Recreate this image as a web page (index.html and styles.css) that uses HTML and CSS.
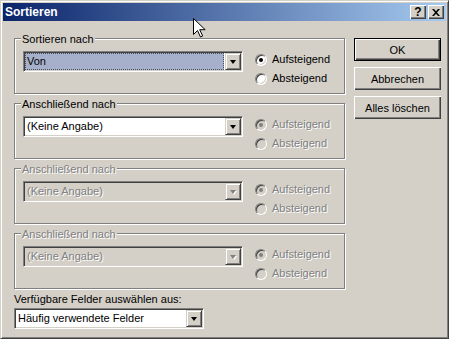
FILE: index.html
```html
<!DOCTYPE html>
<html lang="de">
<head>
    <meta charset="UTF-8">
    <title>Sortieren</title>
    <link rel="stylesheet" href="styles.css">
</head>
<body>
    <div class="dialog">
        <div class="titlebar">
            <span class="title">Sortieren</span>
            <div class="caption-buttons">
                <span class="cap-btn help">?</span>
                <span class="cap-btn">
                    <svg width="8" height="7" viewBox="0 0 8 7"><path d="M0 0h2l2 2.2L6 0h2L5 3.5 8 7H6L4 4.8 2 7H0l3-3.5z" fill="#000"/></svg>
                </span>
            </div>
        </div>

        <div class="content">
            <div class="left">
                <!-- Sortieren nach -->
                <div class="group">
                    <div class="group-title">Sortieren nach</div>
                    <div class="group-row">
                        <div class="combo combo-wide">
                            <div class="combo-field selected">Von</div>
                            <div class="combo-btn"><span class="arrow"></span></div>
                        </div>
                        <div class="radios">
                            <div class="radio-item"><span class="radio checked"></span>Aufsteigend</div>
                            <div class="radio-item"><span class="radio"></span>Absteigend</div>
                        </div>
                    </div>
                </div>

                <div class="group">
                    <div class="group-title">Anschließend nach</div>
                    <div class="group-row">
                        <div class="combo combo-wide">
                            <div class="combo-field">(Keine Angabe)</div>
                            <div class="combo-btn"><span class="arrow"></span></div>
                        </div>
                        <div class="radios disabled">
                            <div class="radio-item"><span class="radio checked"></span>Aufsteigend</div>
                            <div class="radio-item"><span class="radio"></span>Absteigend</div>
                        </div>
                    </div>
                </div>

                <div class="group disabled">
                    <div class="group-title">Anschließend nach</div>
                    <div class="group-row">
                        <div class="combo combo-wide">
                            <div class="combo-field">(Keine Angabe)</div>
                            <div class="combo-btn"><span class="arrow"></span></div>
                        </div>
                        <div class="radios">
                            <div class="radio-item"><span class="radio checked"></span>Aufsteigend</div>
                            <div class="radio-item"><span class="radio"></span>Absteigend</div>
                        </div>
                    </div>
                </div>

                <div class="group disabled">
                    <div class="group-title">Anschließend nach</div>
                    <div class="group-row">
                        <div class="combo combo-wide">
                            <div class="combo-field">(Keine Angabe)</div>
                            <div class="combo-btn"><span class="arrow"></span></div>
                        </div>
                        <div class="radios">
                            <div class="radio-item"><span class="radio checked"></span>Aufsteigend</div>
                            <div class="radio-item"><span class="radio"></span>Absteigend</div>
                        </div>
                    </div>
                </div>

                <div class="fields-label">Verfügbare Felder auswählen aus:</div>
                <div class="combo combo-narrow">
                    <div class="combo-field">Häufig verwendete Felder</div>
                    <div class="combo-btn"><span class="arrow"></span></div>
                </div>
            </div>

            <div class="buttons">
                <button class="btn default">OK</button>
                <button class="btn">Abbrechen</button>
                <button class="btn">Alles löschen</button>
            </div>
        </div>

        <!-- Mauszeiger -->
        <svg class="cursor" width="13" height="20" viewBox="0 0 13 20">
            <path d="M0.5 0.5v16l4-4 3 6.5 2.2-1-3-6.3h5.5z" fill="#fff" stroke="#000" stroke-width="1" stroke-linejoin="miter"/>
        </svg>
    </div>
</body>
</html>
```

FILE: styles.css
```css
/* Estilos base */
* {
    margin: 0;
    padding: 0;
    box-sizing: border-box;
}

body {
    font-family: "Liberation Sans", Arial, sans-serif;
    font-size: 11px;
    line-height: 13px;
    color: #000;
    background: #d4d0c8;
}

/* Ventana */
.dialog {
    position: relative;
    width: 449px;
    height: 339px;
    background: #d4d0c8;
    border: 1px solid;
    border-color: #d4d0c8 #404040 #404040 #d4d0c8;
    box-shadow: inset 1px 1px 0 #fff, inset -1px -1px 0 #808080;
    padding: 2px;
}

/* Barra de título */
.titlebar {
    height: 18px;
    display: flex;
    align-items: center;
    justify-content: space-between;
    padding: 0 2px;
    background: linear-gradient(to right, #0a246a, #a6caf0);
}

.title {
    color: #fff;
    font-weight: bold;
    font-size: 12px;
}

.caption-buttons {
    display: flex;
    gap: 2px;
}

.cap-btn {
    width: 16px;
    height: 14px;
    display: flex;
    align-items: center;
    justify-content: center;
    background: #d4d0c8;
    box-shadow: inset 1px 1px 0 #fff, inset -1px -1px 0 #404040, inset -2px -2px 0 #808080;
}

.cap-btn.help {
    font-weight: bold;
    font-size: 12px;
    padding-top: 1px;
}

/* Contenido */
.content {
    display: flex;
    gap: 9px;
    padding: 17px 0 0 11px;
}

.left {
    width: 331px;
    display: flex;
    flex-direction: column;
}

/* Marcos de grupo */
.group {
    height: 56px;
    border: 1px solid #808080;
    box-shadow: 1px 1px 0 #fff, inset 1px 1px 0 #fff;
    padding: 0 8px;
}

.group + .group {
    margin-top: 9px;
}

.group-title {
    width: fit-content;
    margin: -6px 0 0 -2px;
    padding: 0 1px;
    background: #d4d0c8;
}

.group-row {
    display: flex;
    margin-top: 5px;
}

/* Cuadros combinados */
.combo {
    display: flex;
    height: 21px;
    border: 1px solid;
    border-color: #808080 #fff #fff #808080;
    box-shadow: inset 1px 1px 0 #404040, inset -1px -1px 0 #d4d0c8;
    padding: 1px;
    background: #fff;
}

.combo-wide {
    width: 220px;
}

.combo-narrow {
    width: 190px;
    margin-top: 2px;
}

.combo-field {
    flex: 1;
    line-height: 17px;
    padding-left: 2px;
    white-space: nowrap;
    overflow: hidden;
}

.combo-field.selected {
    background: #a7b0ca;
    outline: 1px dotted #4a4f60;
    outline-offset: -1px;
    margin-right: 1px;
}

.combo-btn {
    width: 16px;
    height: 17px;
    display: flex;
    align-items: center;
    justify-content: center;
    background: #d4d0c8;
    border: 1px solid;
    border-color: #d4d0c8 #404040 #404040 #d4d0c8;
    box-shadow: inset 1px 1px 0 #fff, inset -1px -1px 0 #808080;
}

.arrow {
    width: 0;
    height: 0;
    border-left: 3.5px solid transparent;
    border-right: 3.5px solid transparent;
    border-top: 4px solid #000;
}

/* Botones de opción */
.radios {
    display: flex;
    flex-direction: column;
    gap: 6px;
    margin-left: 12px;
    padding-top: 2px;
}

.radio-item {
    display: flex;
    align-items: center;
    gap: 5px;
    height: 13px;
}

.radio {
    width: 12px;
    height: 12px;
    border-radius: 50%;
    border: 1px solid;
    border-color: #808080 #fff #fff #808080;
    box-shadow: inset 1px 1px 0 #404040, inset -1px -1px 0 #d4d0c8;
    background: #fff;
    display: flex;
    align-items: center;
    justify-content: center;
}

.radio.checked::after {
    content: "";
    width: 4px;
    height: 4px;
    border-radius: 50%;
    background: #000;
}

/* Deshabilitado */
.disabled .group-title,
.disabled .combo-field,
.radios.disabled .radio-item,
.disabled .radio-item {
    color: #808080;
    text-shadow: 1px 1px 0 #fff;
}

.disabled .combo {
    background: #d4d0c8;
}

.disabled .arrow {
    border-top-color: #808080;
    filter: drop-shadow(1px 1px 0 #fff);
}

.radios.disabled .radio,
.disabled .radio {
    background: #d4d0c8;
}

.radios.disabled .radio.checked::after,
.disabled .radio.checked::after {
    background: #808080;
}

.fields-label {
    margin-top: 4px;
}

/* Botones */
.buttons {
    display: flex;
    flex-direction: column;
    gap: 6px;
}

.btn {
    width: 87px;
    height: 23px;
    font-family: inherit;
    font-size: 11px;
    color: #000;
    background: #d4d0c8;
    border: none;
    box-shadow: inset 1px 1px 0 #fff, inset -1px -1px 0 #404040, inset -2px -2px 0 #808080;
}

.btn.default {
    border: 1px solid #000;
}

.cursor {
    position: absolute;
    left: 192px;
    top: 17px;
}
```
